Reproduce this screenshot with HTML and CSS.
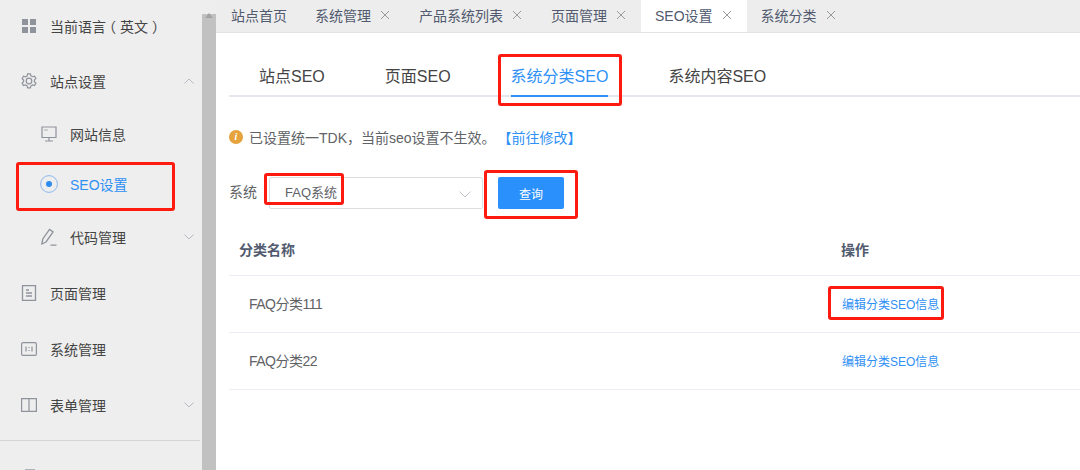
FILE: index.html
```html
<!DOCTYPE html>
<html lang="zh-CN">
<head>
  <meta charset="UTF-8">
  <title>SEO设置</title>
  <link rel="stylesheet" href="styles.css">
</head>
<body>

  <div class="layout">
    <aside class="sidebar">
      <nav class="menu">
        <div class="menu-item first">
          <svg class="icon small" viewBox="0 0 14 14"><path fill="#8f939c" d="M0 0h6v6H0zM8 0h6v6H8zM0 8h6v6H0zM8 8h6v6H8z"/></svg>
          <span>当前语言<span class="paren-l">（</span>英文<span class="paren-r">）</span></span>
        </div>
        <div class="menu-item">
          <svg class="icon" viewBox="0 0 16 16" fill="none" stroke="#8f939c" stroke-width="1.200"><path d="M6.600.8h2.800l.5 2 1.600.9 2-.6 1.400 2.400-1.500 1.400v1.800l1.500 1.400-1.400 2.400-2-.6-1.600.9-.5 2H6.600l-.5-2-1.600-.9-2 .6-1.400-2.400 1.500-1.400V7.100L1.100 5.700l1.400-2.400 2 .6 1.600-.9z"/><circle cx="8" cy="8" r="2.800"/></svg>
          <span>站点设置</span>
          <svg class="chevron" viewBox="0 0 10 6"><path d="M.5 5.500 5 1l4.500 4.500"/></svg>
        </div>
        <div class="menu-item sub up">
          <svg class="icon" viewBox="0 0 16 16" fill="none" stroke="#8f939c" stroke-width="1.200"><path d="M1 1h14v10.500H1zM8 11.500v3M4 15h8"/><path d="M3 4h4" stroke="#b5b8be"/></svg>
          <span>网站信息</span>
        </div>
        <div class="menu-item sub active">
          <svg class="icon" viewBox="0 0 18 18" fill="none" stroke="#8db8ee"><circle cx="9" cy="9" r="8.400"/><circle cx="9" cy="9" r="3" fill="#2d8cf0" stroke="none"/></svg>
          <span>SEO设置</span>
        </div>
        <div class="menu-item sub">
          <svg class="icon tall" viewBox="0 0 16 18" fill="none" stroke="#8f939c" stroke-width="1.300"><path d="M.8 16 1.800 11 8.500 1.500l3.600 2.500L5 14zM9.500 17.200h6"/></svg>
          <span>代码管理</span>
          <svg class="chevron" viewBox="0 0 10 6"><path d="M.5.500 5 5 9.500.5"/></svg>
        </div>
        <div class="menu-item after-sub">
          <svg class="icon" viewBox="0 0 16 16" fill="none" stroke="#8f939c" stroke-width="1.300"><path d="M1.500.7h13v14.600h-13zM5 5h3M5 8h6M5 11h6"/></svg>
          <span>页面管理</span>
        </div>
        <div class="menu-item">
          <svg class="icon" viewBox="0 0 16 14" fill="none" stroke="#8f939c" stroke-width="1.200"><path d="M2 .6h12A1.400 1.400 0 0 1 15.400 2v10a1.400 1.400 0 0 1-1.400 1.400H2A1.400 1.400 0 0 1 .6 12V2A1.400 1.400 0 0 1 2 .6zM5 4.500v5M8 5v1M8 8v1M11 4.500v5"/></svg>
          <span>系统管理</span>
        </div>
        <div class="menu-item">
          <svg class="icon" viewBox="0 0 16 14" fill="none" stroke="#8f939c" stroke-width="1.200"><path d="M.6.600H8v12.800H.6zM8 .6h7.400v12.800H8z"/></svg>
          <span>表单管理</span>
          <svg class="chevron" viewBox="0 0 10 6"><path d="M.5.500 5 5 9.500.5"/></svg>
        </div>
      </nav>
      <div class="menu-divider"></div>
      <div class="menu-item peek">
        <svg class="icon small" viewBox="0 0 14 14"><path fill="#b0b3b9" d="M1 0h10v14H1z"/></svg>
      </div>
    </aside>

    <div class="scrollbar">
      <div class="scroll-arrow"></div>
      <div class="scroll-thumb"></div>
    </div>

    <main class="main">
      <div class="tabbar">
        <div class="tab"><span>站点首页</span></div>
        <div class="tab"><span>系统管理</span><svg class="close" viewBox="0 0 8 8"><path d="M0 0l8 8M8 0 0 8"/></svg></div>
        <div class="tab"><span>产品系统列表</span><svg class="close" viewBox="0 0 8 8"><path d="M0 0l8 8M8 0 0 8"/></svg></div>
        <div class="tab"><span>页面管理</span><svg class="close" viewBox="0 0 8 8"><path d="M0 0l8 8M8 0 0 8"/></svg></div>
        <div class="tab current"><span>SEO设置</span><svg class="close" viewBox="0 0 8 8"><path d="M0 0l8 8M8 0 0 8"/></svg></div>
        <div class="tab"><span>系统分类</span><svg class="close" viewBox="0 0 8 8"><path d="M0 0l8 8M8 0 0 8"/></svg></div>
      </div>

      <div class="content">
        <div class="seo-tabs">
          <div class="seo-tab">站点SEO</div>
          <div class="seo-tab">页面SEO</div>
          <div class="seo-tab selected">系统分类SEO</div>
          <div class="seo-tab">系统内容SEO</div>
        </div>

        <div class="notice">
          <span class="notice-icon">i</span>
          <span>已设置统一TDK，当前seo设置不生效。</span>
          <a class="notice-link">【前往修改】</a>
        </div>

        <div class="filter">
          <label class="filter-label">系统</label>
          <div class="select">
            <span class="select-value">FAQ系统</span>
            <svg class="select-arrow" viewBox="0 0 12 7"><path d="M.5.500 6 6l5.500-5.500"/></svg>
          </div>
          <button class="query-btn">查询</button>
        </div>

        <div class="table">
          <div class="row head">
            <div class="col-name">分类名称</div>
            <div class="col-action">操作</div>
          </div>
          <div class="row">
            <div class="col-name">FAQ分类111</div>
            <div class="col-action"><a>编辑分类SEO信息</a></div>
          </div>
          <div class="row">
            <div class="col-name">FAQ分类22</div>
            <div class="col-action"><a>编辑分类SEO信息</a></div>
          </div>
        </div>
      </div>
    </main>
  </div>

  <!-- red marks drawn over the screenshot -->
  <div class="mark mark-menu"></div>
  <div class="mark mark-tab"></div>
  <div class="mark mark-select"></div>
  <div class="mark mark-btn"></div>
  <div class="mark mark-link"></div>

</body>
</html>
```

FILE: styles.css
```css
* {
  box-sizing: border-box;
}
html, body {
  margin: 0;
  height: 470px;
  overflow: hidden;
}
body {
  position: relative;
  font-family: "Liberation Sans", "Noto Sans CJK SC", sans-serif;
  font-size: 14px;
  color: #515a6e;
  background: white;
}
a {
  color: #2f90f5;
}
.layout {
  display: flex;
  height: 470px;
}

/* left menu */
.sidebar {
  width: 202px;
  flex-shrink: 0;
  overflow: hidden;
  background: #eee;
  color: #444;
  font-size: 14px;
}
.menu-item {
  display: flex;
  align-items: center;
  height: 56px;
  padding-left: 21px;
  padding-right: 8px;
}
.menu-item.first {
  height: 51px;
  margin-bottom: 2px;
}
.menu-item.sub {
  height: 52px;
  padding-left: 41px;
}
.menu-item.up {
  margin-top: -1px;
}
.menu-item.after-sub {
  margin-top: 2px;
}
.menu-item.active {
  color: #2f90f5;
  height: 48px;
  margin-bottom: 3px;
}
.menu-item.peek {
  height: 70px;
  padding-left: 23px;
}
.paren-l {
  padding: 0 4px 0 3px;
  font-feature-settings: "halt";
}
.paren-r {
  padding: 0 3px 0 4px;
  font-feature-settings: "halt";
}
.icon {
  width: 16px;
  height: 16px;
  margin-right: 13px;
  flex-shrink: 0;
}
.icon.small {
  width: 14px;
  height: 14px;
  margin-left: 1px;
  margin-right: 14px;
}
.icon.tall {
  height: 18px;
}
.active .icon {
  width: 18px;
  height: 18px;
  margin-left: -1px;
  margin-right: 12px;
}
.chevron {
  width: 10px;
  height: 6px;
  margin-left: auto;
  fill: none;
  stroke: #b4b8bf;
}
.menu-divider {
  height: 1px;
  margin-top: 7px;
  margin-right: 2px;
  background: #d5d5d5;
}

/* page scrollbar */
.scrollbar {
  width: 14px;
  flex-shrink: 0;
  background: #eee;
}
.scroll-arrow {
  width: 0;
  height: 14px;
  margin-left: 3px;
  border-left: 4px solid transparent;
  border-right: 4px solid transparent;
  border-bottom: 5px solid #a3a3a3;
  transform: translateY(4px);
}
.scroll-thumb {
  height: 456px;
  background: #c1c1c1;
}

/* main area */
.main {
  flex: 1;
  min-width: 0;
}
.tabbar {
  display: flex;
  height: 33px;
  padding-left: 1px;
  background: #ededed;
  border-bottom: 1px solid #e3e3e3;
}
.tab {
  display: flex;
  align-items: center;
  height: 32px;
  padding: 0 14px 2px;
  color: #515a6e;
  white-space: nowrap;
}
.tab.current {
  background: white;
}
.close {
  width: 8px;
  height: 8px;
  margin-left: 10px;
  margin-right: 2px;
  fill: none;
  stroke: #9a9a9a;
}
.content {
  padding: 0 0 0 13px;
}
.seo-tabs {
  display: flex;
  height: 64px;
  border-bottom: 2px solid #e4e7ed;
}
.seo-tab {
  height: 64px;
  margin: 0 30px;
  padding-top: 32px;
  font-size: 16px;
  line-height: 24px;
  color: #444;
}
.seo-tab.selected {
  color: #2f90f5;
  border-bottom: 2px solid #2f90f5;
}
.notice {
  display: flex;
  align-items: center;
  height: 20px;
  margin-top: 30px;
  color: #606266;
}
.notice-icon {
  width: 14px;
  height: 14px;
  margin-right: 6px;
  border-radius: 50%;
  background: #e6a23c;
  color: white;
  font: italic bold 10px/14px "Liberation Serif", serif;
  text-align: center;
}
.notice-link {
  margin-left: 2px;
}
.filter {
  display: flex;
  align-items: center;
  height: 32px;
  margin-top: 30px;
}
.filter-label {
  width: 40px;
  padding-bottom: 5px;
  color: #606266;
}
.select {
  display: flex;
  align-items: center;
  justify-content: space-between;
  width: 214px;
  height: 32px;
  padding: 0 11px 0 15px;
  font-size: 13px;
  color: #606266;
  border: 1px solid #dcdee2;
  border-radius: 2px;
}
.select-value {
  padding-bottom: 3px;
}
.select-arrow {
  width: 12px;
  height: 7px;
  margin-top: 2px;
  fill: none;
  stroke: #c0c4cc;
}
.query-btn {
  width: 66px;
  height: 32px;
  margin-left: 15px;
  font: 12px "Liberation Sans", "Noto Sans CJK SC", sans-serif;
  color: white;
  background: #2a90fb;
  border: none;
  border-radius: 2px;
}
.table {
  margin-top: 10px;
}
.row {
  display: flex;
  align-items: center;
  height: 57px;
  padding-bottom: 2px;
  color: #606266;
  border-bottom: 1px solid #ebeef5;
}
.row.head {
  padding-top: 3px;
  padding-bottom: 0;
  font-weight: bold;
  color: #515a6e;
}
.col-name {
  width: 612px;
  padding-left: 20px;
  font-size: 14px;
  letter-spacing: -0.5px;
}
.head .col-name {
  padding-left: 10px;
  letter-spacing: 0;
}
.col-action a {
  padding-left: 1px;
  font-size: 12px;
}

/* red marks */
.mark {
  position: absolute;
  border: 3px solid #ff1a0f;
  border-radius: 3px;
}
.mark-menu {
  left: 16px;
  top: 162px;
  width: 159px;
  height: 49px;
}
.mark-tab {
  left: 498px;
  top: 54px;
  width: 124px;
  height: 52px;
}
.mark-select {
  left: 264px;
  top: 173px;
  width: 80px;
  height: 32px;
}
.mark-btn {
  left: 484px;
  top: 170px;
  width: 94px;
  height: 49px;
}
.mark-link {
  left: 828px;
  top: 286px;
  width: 116px;
  height: 34px;
}
```
